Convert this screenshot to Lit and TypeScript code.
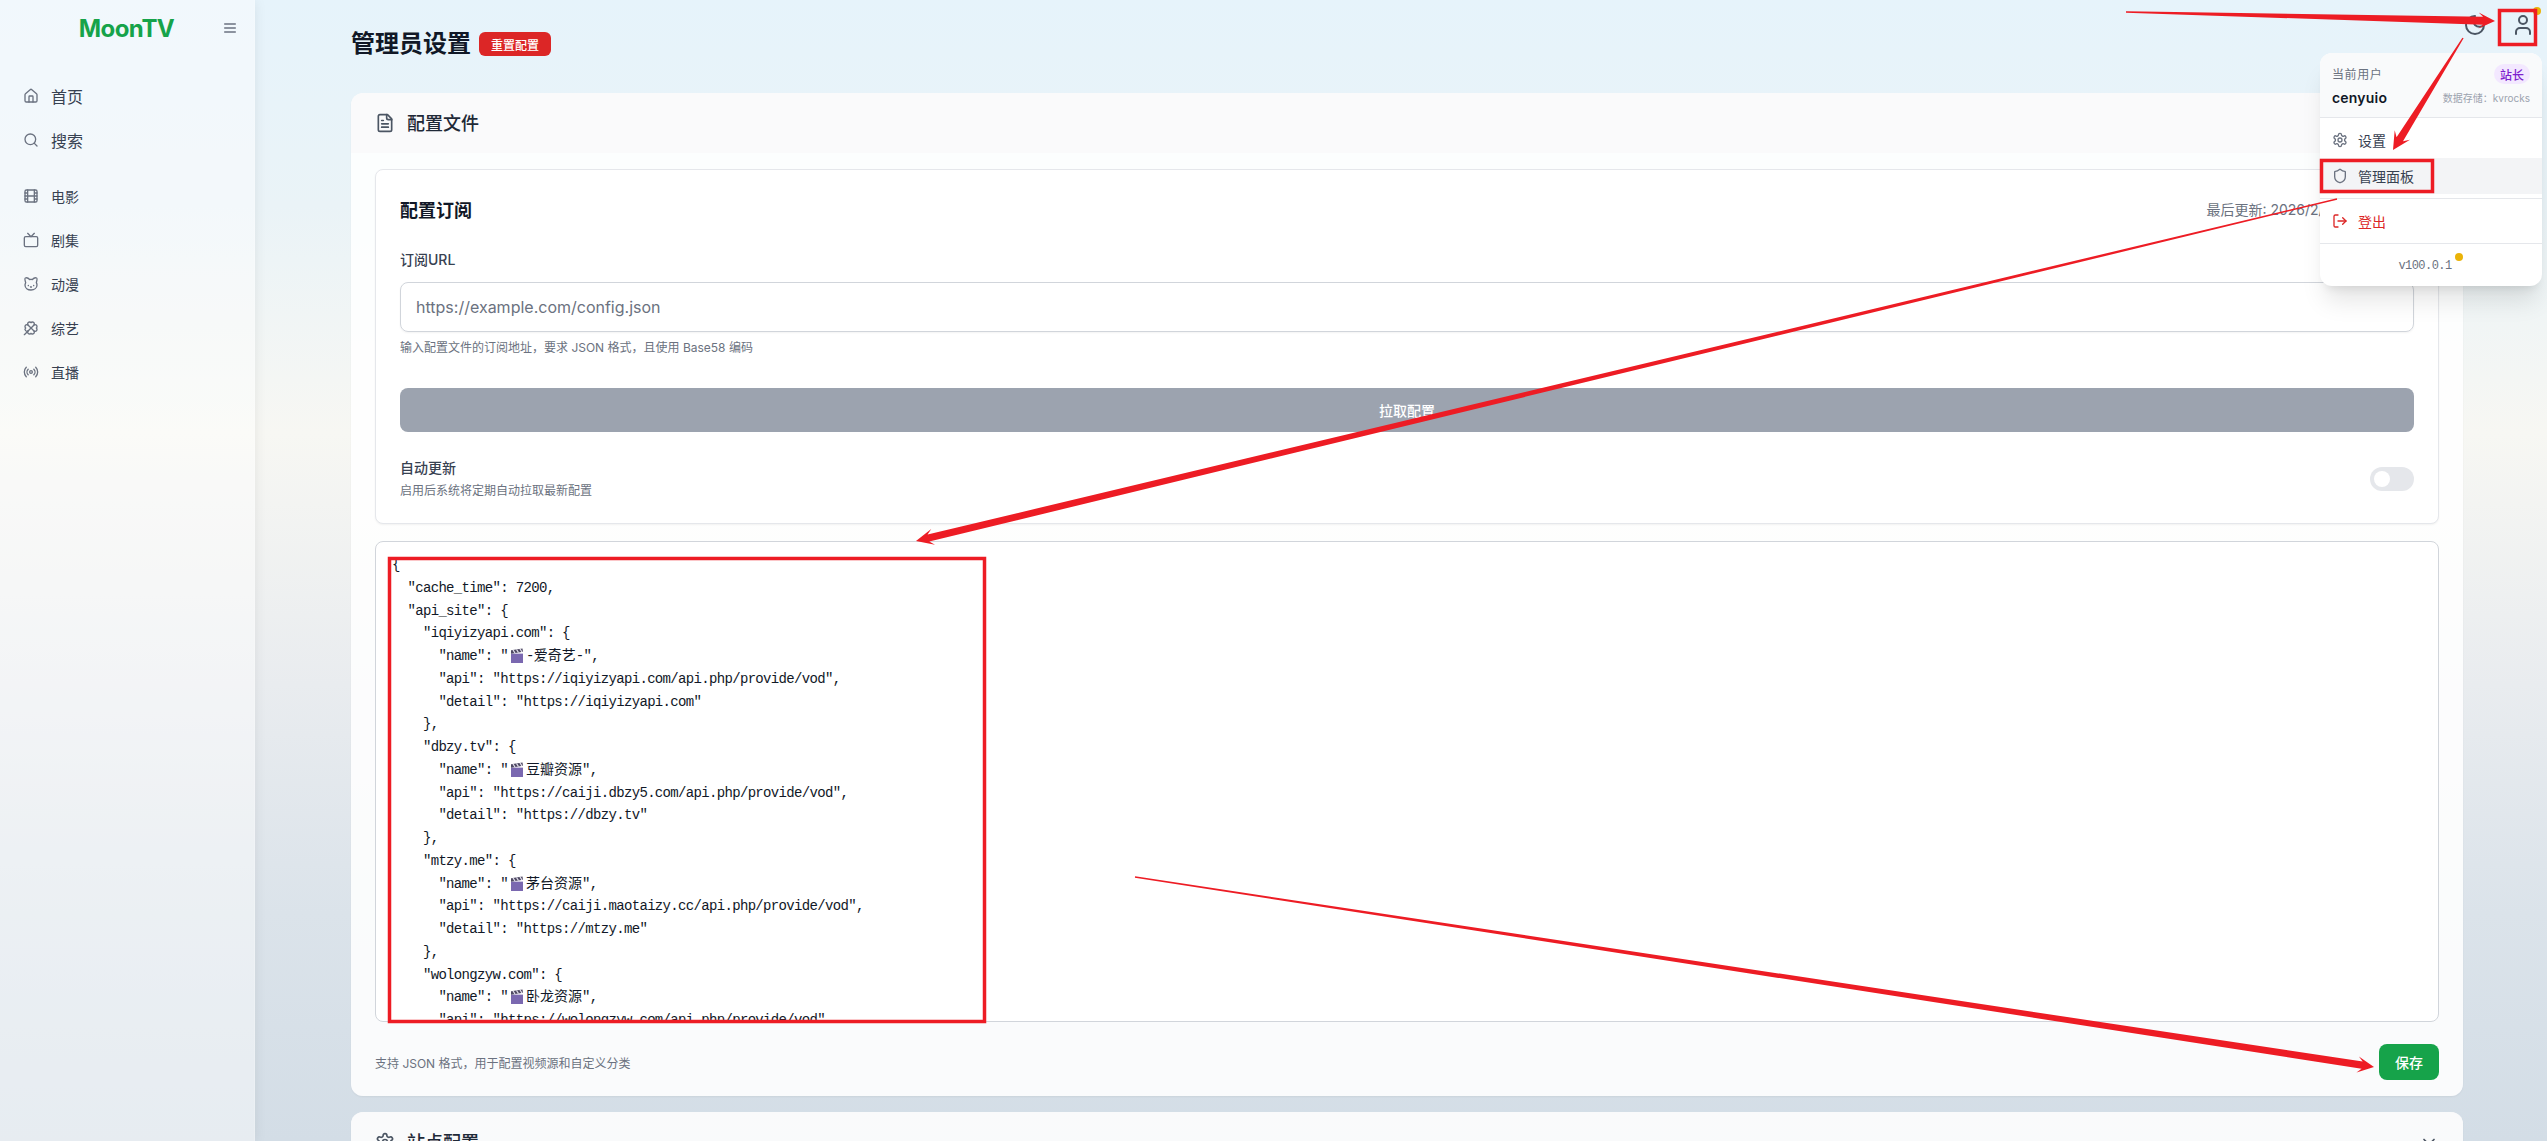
import { LitElement, html, css, svg } from "lit";
import { customElement } from "lit/decorators.js";

const ic = (body: unknown, size = 16) => html`<svg class="ic" width=${size} height=${size} viewBox="0 0 24 24" fill="none" stroke="currentColor" stroke-width="2" stroke-linecap="round" stroke-linejoin="round">${body}</svg>`;

const I = {
  home: svg`<path d="M15 21v-8a1 1 0 0 0-1-1h-4a1 1 0 0 0-1 1v8"/><path d="M3 10a2 2 0 0 1 .709-1.528l7-5.999a2 2 0 0 1 2.582 0l7 5.999A2 2 0 0 1 21 10v9a2 2 0 0 1-2 2H5a2 2 0 0 1-2-2z"/>`,
  search: svg`<circle cx="11" cy="11" r="8"/><path d="m21 21-4.3-4.3"/>`,
  film: svg`<rect width="18" height="18" x="3" y="3" rx="2"/><path d="M7 3v18M3 7.5h4M3 12h18M3 16.5h4M17 3v18M17 7.5h4M17 16.5h4"/>`,
  tv: svg`<rect width="20" height="15" x="2" y="7" rx="2" ry="2"/><polyline points="17 2 12 7 7 2"/>`,
  cat: svg`<path d="M12 5c.67 0 1.35.09 2 .26 1.78-2 5.03-2.84 6.42-2.26 1.4.58-.42 7-.42 7 .57 1.07 1 2.24 1 3.44C21 17.9 16.97 21 12 21s-9-3-9-7.56c0-1.25.5-2.4 1-3.44 0 0-1.89-6.42-.5-7 1.39-.58 4.72.23 6.5 2.23A9.04 9.04 0 0 1 12 5Z"/><path d="M8 14v.5M16 14v.5M11.25 16.25h1.5L12 17l-.75-.75Z"/>`,
  clover: svg`<path d="M16.17 7.83 2 22"/><path d="M4.02 12a2.827 2.827 0 1 1 3.81-4.17A2.827 2.827 0 1 1 12 4.02a2.827 2.827 0 1 1 4.17 3.81A2.827 2.827 0 1 1 19.98 12a2.827 2.827 0 1 1-3.81 4.17A2.827 2.827 0 1 1 12 19.98a2.827 2.827 0 1 1-4.17-3.81A1 1 0 1 1 4 12"/><path d="m7.83 7.83 8.34 8.34"/>`,
  radio: svg`<path d="M16.247 7.761a6 6 0 0 1 0 8.478"/><path d="M19.075 4.933a10 10 0 0 1 0 14.134"/><path d="M4.925 19.067a10 10 0 0 1 0-14.134"/><path d="M7.753 16.239a6 6 0 0 1 0-8.478"/><circle cx="12" cy="12" r="2"/>`,
  file: svg`<path d="M15 2H6a2 2 0 0 0-2 2v16a2 2 0 0 0 2 2h12a2 2 0 0 0 2-2V7Z"/><path d="M14 2v4a2 2 0 0 0 2 2h4"/><path d="M10 9H8M16 13H8M16 17H8"/>`,
  gear: svg`<path d="M12.22 2h-.44a2 2 0 0 0-2 2v.18a2 2 0 0 1-1 1.73l-.43.25a2 2 0 0 1-2 0l-.15-.08a2 2 0 0 0-2.73.73l-.22.38a2 2 0 0 0 .73 2.73l.15.1a2 2 0 0 1 1 1.72v.51a2 2 0 0 1-1 1.74l-.15.09a2 2 0 0 0-.73 2.73l.22.38a2 2 0 0 0 2.73.73l.15-.08a2 2 0 0 1 2 0l.43.25a2 2 0 0 1 1 1.73V20a2 2 0 0 0 2 2h.44a2 2 0 0 0 2-2v-.18a2 2 0 0 1 1-1.73l.43-.25a2 2 0 0 1 2 0l.15.08a2 2 0 0 0 2.73-.73l.22-.39a2 2 0 0 0-.73-2.73l-.15-.08a2 2 0 0 1-1-1.74v-.5a2 2 0 0 1 1-1.74l.15-.09a2 2 0 0 0 .73-2.73l-.22-.38a2 2 0 0 0-2.73-.73l-.15.08a2 2 0 0 1-2 0l-.43-.25a2 2 0 0 1-1-1.73V4a2 2 0 0 0-2-2z"/><circle cx="12" cy="12" r="3"/>`,
  shield: svg`<path d="M20 13c0 5-3.5 7.5-7.66 8.95a1 1 0 0 1-.67-.01C7.5 20.5 4 18 4 13V6a1 1 0 0 1 1-1c2 0 4.5-1.2 6.24-2.72a1.17 1.17 0 0 1 1.52 0C14.51 3.81 17 5 19 5a1 1 0 0 1 1 1z"/>`,
  logout: svg`<path d="m16 17 5-5-5-5"/><path d="M21 12H9"/><path d="M9 21H5a2 2 0 0 1-2-2V5a2 2 0 0 1 2-2h4"/>`,
  user: svg`<path d="M19 21v-2a4 4 0 0 0-4-4H9a4 4 0 0 0-4 4v2"/><circle cx="12" cy="7" r="4"/>`,
  moon: svg`<path d="M12 3a6 6 0 0 0 9 9 9 9 0 1 1-9-9Z"/>`,
  chev: svg`<path d="m6 9 6 6 6-6"/>`,
  menu: svg`<path d="M4 6h16M4 12h16M4 18h16"/>`,
};

const clap = html`<svg class="clap" width="14" height="16" viewBox="0 0 14 16" preserveAspectRatio="none"><rect x="1" y="6" width="12" height="10" fill="#7a68b0"/><path d="M1 2.5 12.5 0.5 13 4 1 6Z" fill="#4f4a63"/><path d="M3 2.2 5 5.4M6.5 1.6l2 3.2M10 1l2 3.2" stroke="#e8e4f2" stroke-width="1.2"/></svg>`;

type Seg = string | "E";
const lines: Seg[][] = [
  ["{"],
  ['  "cache_time": 7200,'],
  ['  "api_site": {'],
  ['    "iqiyizyapi.com": {'],
  ['      "name": "', "E", '-爱奇艺-",'],
  ['      "api": "https://iqiyizyapi.com/api.php/provide/vod",'],
  ['      "detail": "https://iqiyizyapi.com"'],
  ["    },"],
  ['    "dbzy.tv": {'],
  ['      "name": "', "E", '豆瓣资源",'],
  ['      "api": "https://caiji.dbzy5.com/api.php/provide/vod",'],
  ['      "detail": "https://dbzy.tv"'],
  ["    },"],
  ['    "mtzy.me": {'],
  ['      "name": "', "E", '茅台资源",'],
  ['      "api": "https://caiji.maotaizy.cc/api.php/provide/vod",'],
  ['      "detail": "https://mtzy.me"'],
  ["    },"],
  ['    "wolongzyw.com": {'],
  ['      "name": "', "E", '卧龙资源",'],
  ['      "api": "https://wolongzyw.com/api.php/provide/vod",'],
];

function arrow(x1: number, y1: number, x2: number, y2: number, shaft: number, wing: number, len: number) {
  const l = Math.hypot(x2 - x1, y2 - y1);
  const dx = (x2 - x1) / l, dy = (y2 - y1) / l;
  const nx = -dy, ny = dx;
  const p = (along: number, off: number) => `${x2 - dx * along + nx * off},${y2 - dy * along + ny * off}`;
  const pts = [
    p(l, -0.7), p(l, 0.7),
    p(len * 0.8, shaft), p(len * 1.1, wing), `${x2},${y2}`, p(len * 1.1, -wing), p(len * 0.8, -shaft),
  ].join(" ");
  return svg`<polygon points=${pts} fill="#ed1c24"/>`;
}

const nav1 = [[I.home, "首页"], [I.search, "搜索"]] as const;
const nav2 = [[I.film, "电影"], [I.tv, "剧集"], [I.cat, "动漫"], [I.clover, "综艺"], [I.radio, "直播"]] as const;

@customElement("app-root")
export class AppRoot extends LitElement {
  static styles = css`
    :host {
      display: block; position: relative; height: 100vh; overflow: hidden;
      font-family: Inter, "Noto Sans CJK SC", sans-serif; color: #111827;
      background: linear-gradient(180deg, #e6f3fb 0%, #eaf3f7 18%, #f7f7f3 38%, #e9ecef 60%, #dbe3ea 80%, #d3dde6 100%);
    }
    .ic { display: block; flex: none; }
    .layout { display: flex; height: 100%; }
    .side {
      width: 255px; flex: none; height: 100%; background: rgba(255,255,255,.45);
      box-shadow: 0 1px 12px rgba(0,0,0,.08); border-right: 1px solid rgba(255,255,255,.2); box-sizing: border-box;
    }
    .logo-row { height: 56px; position: relative; display: flex; justify-content: center; align-items: center; }
    .logo { font-size: 24px; font-weight: 700; color: #16a34a; letter-spacing: -0.6px; margin-right: 1px; }
    .burger { position: absolute; left: 222px; top: 20px; color: #6b7280; }
    .nav { padding-top: 18px; }
    .item { display: flex; align-items: center; height: 44px; padding-left: 23px; gap: 12px; color: #374151; font-size: 16px; }
    .item .ic { color: #6b7280; }
    .nav2 { padding-top: 12px; }
    .nav2 .item { font-size: 14px; }
    .main { flex: 1; min-width: 0; padding: 28px 84px 0 96px; box-sizing: border-box; }
    .title-row { display: flex; align-items: center; gap: 8px; height: 32px; margin-bottom: 33px; }
    h1 { margin: 0; font-size: 24px; font-weight: 700; color: #111827; line-height: 32px; }
    .reset { height: 24px; width: 72px; border-radius: 6px; background: #dc2626; color: #fff; font-size: 12px; font-weight: 500; display: flex; align-items: center; justify-content: center; }
    .card { background: rgba(255,255,255,.8); border-radius: 12px; box-shadow: 0 1px 2px rgba(0,0,0,.05); overflow: hidden; margin-bottom: 16px; }
    .card-head { height: 60px; box-sizing: border-box; display: flex; align-items: center; gap: 12px; padding: 0 24px; background: rgba(249,250,251,.9); color: #4b5563; }
    .card-head h2 { margin: 0 0 2px; font-size: 18px; font-weight: 500; color: #1f2937; flex: 1; }
    .card-body { padding: 16px 24px; background: rgba(255,255,255,.35); }
    .sub { background: #fff; border: 1px solid #e5e7eb; border-radius: 8px; padding: 24px; box-shadow: 0 1px 2px rgba(0,0,0,.05); height: 355px; box-sizing: border-box; }
    .sub-top { display: flex; justify-content: space-between; align-items: center; height: 30px; }
    .sub-top h3 { margin: 0; font-size: 18px; font-weight: 600; color: #111827; }
    .updated { font-size: 14px; color: #6b7280; padding-right: 15px; }
    .lbl { margin-top: 26px; font-size: 14px; line-height: 20px; font-weight: 500; color: #374151; }
    .input { margin-top: 12px; height: 50px; box-sizing: border-box; border: 1px solid #d1d5db; border-radius: 8px; padding: 0 15px; display: flex; align-items: center; font-size: 16px; color: #6b7280; box-shadow: 0 1px 2px rgba(0,0,0,.05); }
    .hint { margin-top: 8px; font-size: 12px; line-height: 16px; color: #6b7280; }
    .pull { margin-top: 32px; height: 44px; border-radius: 8px; background: #9ca3af; color: #fff; font-size: 14px; font-weight: 500; display: flex; align-items: center; justify-content: center; }
    .auto { margin-top: 26px; display: flex; align-items: center; justify-content: space-between; }
    .auto .hint { margin-top: 5px; }
    .auto .lbl { margin-top: 0; }
    .toggle { width: 44px; height: 24px; border-radius: 12px; background: #e5e7eb; padding: 4px; box-sizing: border-box; }
    .toggle i { display: block; width: 16px; height: 16px; border-radius: 50%; background: #fff; }
    .code {
      margin-top: 17px; height: 481px; box-sizing: border-box; border: 1px solid #d1d5db; border-radius: 8px; background: #fff;
      padding: 12px 16px 0; overflow: hidden; font-family: "Liberation Mono", "Noto Sans CJK SC", monospace;
      font-size: 14px; line-height: 22.75px; letter-spacing: -0.67px; color: #111827; white-space: pre;
    }
    .code .cn { letter-spacing: 0; font-family: "Noto Sans CJK SC", sans-serif; font-weight: 400; line-height: 1; }
    .code .line { height: 22.75px; }
    .clap { display: inline-block; vertical-align: -3px; margin: 0 2px; height: 15px; }
    .foot { margin-top: 22px; display: flex; align-items: center; justify-content: space-between; }
    .foot .note { font-size: 12px; color: #6b7280; }
    .save { width: 60px; height: 36px; background: #16a34a; color: #fff; border-radius: 8px; font-size: 14px; font-weight: 500; display: flex; align-items: center; justify-content: center; }
    .top-btn { position: absolute; top: 5px; width: 40px; height: 40px; display: flex; align-items: center; justify-content: center; color: #4b5563; }
    .dot { position: absolute; width: 8px; height: 8px; border-radius: 50%; background: #eab308; }
    .menu {
      position: absolute; left: 2320px; top: 53px; width: 222px; height: 233px; background: #fff; border-radius: 12px; overflow: hidden;
      box-shadow: 0 20px 25px -5px rgba(0,0,0,.1), 0 8px 10px -6px rgba(0,0,0,.1); border: 0; font-size: 14px; color: #374151;
    }
    .m-head { height: 65px; box-sizing: border-box; background: #f9fafb; border-bottom: 1px solid #e5e7eb; padding: 10px 12px 0; }
    .m-row { display: flex; justify-content: space-between; align-items: center; }
    .m-cur { font-size: 12px; letter-spacing: 0.6px; color: #6b7280; }
    .m-badge { height: 20px; width: 36px; border-radius: 10px; background: #f3e8ff; color: #7e22ce; font-size: 12px; font-weight: 500; display: flex; align-items: center; justify-content: center; margin-top: 1px; }
    .m-row.two { margin-top: 5px; }
    .m-name { font-size: 14px; font-weight: 600; color: #111827; letter-spacing: 0.2px; }
    .m-store { font-size: 10px; color: #9ca3af; }
    .m-list { padding: 4px 0; }
    .m-item { height: 36px; display: flex; align-items: center; gap: 10px; padding-left: 12px; color: #374151; }
    .m-item .ic { color: #6b7280; }
    .m-item.on { background: #f3f4f6; }
    .m-item.red, .m-item.red .ic { color: #dc2626; }
    .m-div { height: 1px; background: #e5e7eb; }
    .m-ver { height: 41px; box-sizing: border-box; display: flex; align-items: center; justify-content: center; font-family: "Liberation Mono", monospace; font-size: 12px; letter-spacing: -0.55px; color: #6b7280; position: relative; padding: 2px 12px 0 0; }
    .overlay { position: absolute; left: 0; top: 0; pointer-events: none; }
  `;

  renderLine(l: Seg[]) {
    return html`<div class="line">${l.map((s) => {
      if (s === "E") return clap;
      const m = s.match(/^([^\u4e00-\u9fff]*)([\u4e00-\u9fff]+)(.*)$/);
      if (m) return html`${m[1]}<span class="cn">${m[2]}</span>${m[3]}`;
      return s;
    })}</div>`;
  }

  render() {
    return html`
      <div class="layout">
        <aside class="side">
          <div class="logo-row"><span class="logo">MoonTV</span><span class="burger">${ic(I.menu, 16)}</span></div>
          <nav class="nav">${nav1.map(([i, t]) => html`<div class="item">${ic(i)}<span>${t}</span></div>`)}</nav>
          <nav class="nav2">${nav2.map(([i, t]) => html`<div class="item">${ic(i)}<span>${t}</span></div>`)}</nav>
        </aside>
        <main class="main">
          <div class="title-row"><h1>管理员设置</h1><span class="reset">重置配置</span></div>
          <section class="card">
            <div class="card-head">${ic(I.file, 20)}<h2>配置文件</h2></div>
            <div class="card-body">
              <div class="sub">
                <div class="sub-top"><h3>配置订阅</h3><span class="updated">最后更新: 2026/2/12 12:34:56</span></div>
                <div class="lbl">订阅URL</div>
                <div class="input">https://example.com/config.json</div>
                <div class="hint">输入配置文件的订阅地址，要求 JSON 格式，且使用 Base58 编码</div>
                <div class="pull">拉取配置</div>
                <div class="auto">
                  <div><div class="lbl">自动更新</div><div class="hint">启用后系统将定期自动拉取最新配置</div></div>
                  <div class="toggle"><i></i></div>
                </div>
              </div>
              <div class="code">${lines.map((l) => this.renderLine(l))}</div>
              <div class="foot"><span class="note">支持 JSON 格式，用于配置视频源和自定义分类</span><span class="save">保存</span></div>
            </div>
          </section>
          <section class="card">
            <div class="card-head">${ic(I.gear, 20)}<h2>站点配置</h2>${ic(I.chev, 20)}</div>
          </section>
        </main>
      </div>

      <div class="top-btn" style="left:2455px">${ic(I.moon, 24)}</div>
      <div class="top-btn" style="left:2503px">${ic(I.user, 24)}</div>
      <span class="dot" style="left:2533px;top:7px"></span>

      <div class="menu">
        <div class="m-head">
          <div class="m-row"><span class="m-cur">当前用户</span><span class="m-badge">站长</span></div>
          <div class="m-row two"><span class="m-name">cenyuio</span><span class="m-store">数据存储：kvrocks</span></div>
        </div>
        <div class="m-list">
          <div class="m-item">${ic(I.gear)}<span>设置</span></div>
          <div class="m-item on">${ic(I.shield)}<span>管理面板</span></div>
        </div>
        <div class="m-div"></div>
        <div class="m-list"><div class="m-item red">${ic(I.logout)}<span>登出</span></div></div>
        <div class="m-div"></div>
        <div class="m-ver">v100.0.1<span class="dot" style="left:135px;top:9px"></span></div>
      </div>

      <svg class="overlay" width="2547" height="1141" viewBox="0 0 2547 1141">
        <g fill="none" stroke="#ed1c24" stroke-width="3.5">
          <rect x="2499.5" y="10.5" width="36" height="34"/>
          <rect x="2321.5" y="160.5" width="111" height="31"/>
          <rect x="389.5" y="558.5" width="595" height="463"/>
        </g>
        ${arrow(2126, 12, 2495, 21, 4, 8, 15)}
        ${arrow(2463, 38, 2393, 150, 3.8, 9, 16)}
        ${arrow(2337, 199, 916, 541, 3.6, 8, 16)}
        ${arrow(1135, 877, 2374, 1067, 3.6, 8, 15)}
      </svg>
    `;
  }
}
